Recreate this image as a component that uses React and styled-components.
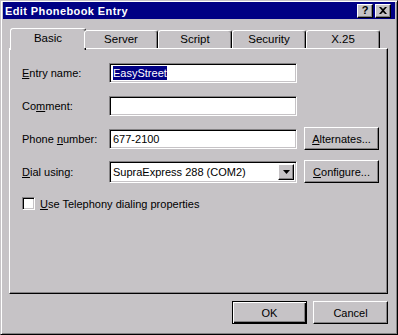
import * as React from "react";
import styled, { createGlobalStyle, css } from "styled-components";

const gray = "#c6c3c6";
const shadow = "#848284";
const navy = "#000084";

const Global = createGlobalStyle`
  html, body {
    margin: 0;
    background: ${gray};
  }
  body {
    font-family: "Liberation Sans", Arial, sans-serif;
    font-size: 11px;
    color: #000;
  }
`;

const raised = css`
  border-style: solid;
  border-width: 1px;
  border-color: #fff #000 #000 #fff;
  box-shadow: inset -1px -1px 0 ${shadow}, inset 1px 1px 0 ${gray};
`;

const sunken = css`
  border-style: solid;
  border-width: 1px;
  border-color: ${shadow} #fff #fff ${shadow};
  box-shadow: inset 1px 1px 0 #000, inset -1px -1px 0 ${gray};
`;

const Window = styled.div`
  box-sizing: border-box;
  width: 398px;
  height: 335px;
  background: ${gray};
  border-style: solid;
  border-width: 1px;
  border-color: ${gray} #000 #000 ${gray};
  box-shadow: inset 1px 1px 0 #fff, inset -1px -1px 0 ${shadow};
  display: flex;
  flex-direction: column;
  padding: 1px 2px 2px 2px;
`;

const TitleBar = styled.div`
  height: 18px;
  background: ${navy};
  display: flex;
  align-items: center;
  justify-content: space-between;
  padding: 0 4px 0 2px;
`;

const Title = styled.span`
  color: #fff;
  font-weight: bold;
  font-size: 11px;
  letter-spacing: 0.4px;
`;

const CaptionButtons = styled.div`
  display: flex;
  gap: 2px;
`;

const CaptionButton = styled.div`
  ${raised};
  box-sizing: border-box;
  width: 16px;
  height: 14px;
  background: ${gray};
  display: flex;
  align-items: center;
  justify-content: center;
  font-weight: bold;
  font-size: 11px;
  line-height: 1;
`;

const Content = styled.div`
  flex: 1;
  display: flex;
  flex-direction: column;
  padding: 9px 7px 8px 6px;
`;

const TabRow = styled.div`
  display: flex;
  align-items: flex-end;
  padding-left: 3px;
  height: 20px;
  position: relative;
  z-index: 1;
`;

const Tab = styled.div`
  box-sizing: border-box;
  width: ${(p) => (p.$active ? p.$w + 4 : p.$w)}px;
  height: ${(p) => (p.$active ? 22 : 18)}px;
  margin: ${(p) => (p.$active ? "0 -2px -2px -2px" : "0")};
  background: ${gray};
  border-style: solid;
  border-width: 1px 1px 0 1px;
  border-color: #fff #000 transparent #fff;
  border-radius: 3px 3px 0 0;
  box-shadow: inset -1px 0 0 ${shadow};
  display: flex;
  justify-content: center;
  padding-top: ${(p) => (p.$active ? 3 : 2)}px;
  font-size: 11.5px;
`;

const Panel = styled.div`
  box-sizing: border-box;
  height: 246px;
  border-style: solid;
  border-width: 1px;
  border-color: #fff #000 #000 #fff;
  box-shadow: inset -1px -1px 0 ${shadow};
  padding: 12px 9px 0 12px;
`;

const FormGrid = styled.div`
  display: grid;
  grid-template-columns: 80px 188px 75px;
  grid-auto-rows: 23px;
  column-gap: 7px;
  row-gap: 10px;
  align-items: center;
`;

const Label = styled.label`
  white-space: nowrap;
`;

const TextBox = styled.div`
  ${sunken};
  box-sizing: border-box;
  height: 20px;
  background: #fff;
  display: flex;
  align-items: center;
  padding-left: 3px;
  white-space: nowrap;
`;

const Selected = styled.span`
  background: ${navy};
  color: #fff;
  padding: 1px 0;
`;

const Combo = styled(TextBox)`
  height: 22px;
  justify-content: space-between;
  padding-right: 2px;
`;

const DropButton = styled.div`
  ${raised};
  box-sizing: border-box;
  width: 16px;
  height: 16px;
  background: ${gray};
  display: flex;
  align-items: center;
  justify-content: center;
`;

const Button = styled.div`
  ${raised};
  box-sizing: border-box;
  width: 75px;
  height: 23px;
  background: ${gray};
  display: flex;
  align-items: center;
  justify-content: center;
  ${(p) =>
    p.$default &&
    css`
      border: 1px solid #000;
      box-shadow: inset 1px 1px 0 #fff, inset -1px -1px 0 #000,
        inset -2px -2px 0 ${shadow};
    `}
`;

const CheckRow = styled.div`
  display: flex;
  align-items: center;
  gap: 5px;
  margin-top: 14px;
`;

const CheckBox = styled.div`
  ${sunken};
  box-sizing: border-box;
  width: 13px;
  height: 13px;
  background: #fff;
`;

const Footer = styled.div`
  display: flex;
  justify-content: flex-end;
  gap: 6px;
  margin-top: 7px;
`;

const tabs = [
  { name: "Basic", w: 72 },
  { name: "Server", w: 74 },
  { name: "Script", w: 74 },
  { name: "Security", w: 74 },
  { name: "X.25", w: 74 },
];

export default function App() {
  return (
    <>
      <Global />
      <Window>
        <TitleBar>
          <Title>Edit Phonebook Entry</Title>
          <CaptionButtons>
            <CaptionButton>?</CaptionButton>
            <CaptionButton>
              <svg width="8" height="7" viewBox="0 0 8 7">
                <path d="M0 0h2l2 2 2-2h2L5 3.5 8 7H6L4 5 2 7H0l3-3.5z" fill="#000" />
              </svg>
            </CaptionButton>
          </CaptionButtons>
        </TitleBar>
        <Content>
          <TabRow>
            {tabs.map((t, i) => (
              <Tab key={t.name} $w={t.w} $active={i === 0}>
                {t.name}
              </Tab>
            ))}
          </TabRow>
          <Panel>
            <FormGrid>
              <Label><u>E</u>ntry name:</Label>
              <TextBox><Selected>EasyStreet</Selected></TextBox>
              <span />
              <Label>Co<u>m</u>ment:</Label>
              <TextBox />
              <span />
              <Label>Phone <u>n</u>umber:</Label>
              <TextBox>677-2100</TextBox>
              <Button><u>A</u>lternates...</Button>
              <Label><u>D</u>ial using:</Label>
              <Combo>
                SupraExpress 288 (COM2)
                <DropButton>
                  <svg width="7" height="4" viewBox="0 0 7 4">
                    <path d="M0 0h7L3.5 4z" fill="#000" />
                  </svg>
                </DropButton>
              </Combo>
              <Button><u>C</u>onfigure...</Button>
            </FormGrid>
            <CheckRow>
              <CheckBox />
              <span><u>U</u>se Telephony dialing properties</span>
            </CheckRow>
          </Panel>
          <Footer>
            <Button $default>OK</Button>
            <Button>Cancel</Button>
          </Footer>
        </Content>
      </Window>
    </>
  );
}
